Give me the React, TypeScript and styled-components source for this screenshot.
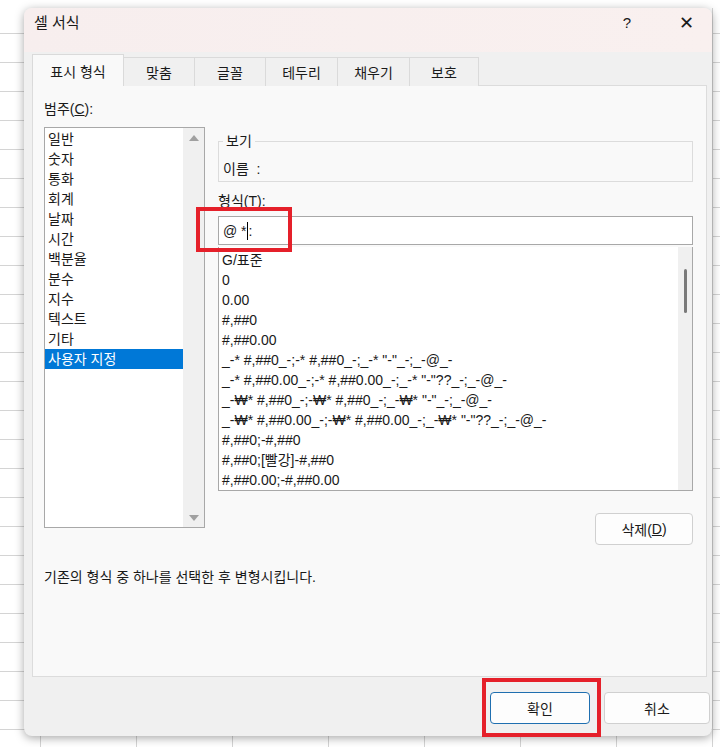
import React from "react";
import styled, { createGlobalStyle } from "styled-components";

const G = createGlobalStyle`
  html,body{margin:0;padding:0;}
  body{width:720px;height:747px;overflow:hidden;font-family:"Liberation Sans","Noto Sans CJK KR",sans-serif;font-size:14px;color:#1a1a1a;
    background-color:#fff;
    background-image:linear-gradient(#d4d4d4 1px,transparent 1px),linear-gradient(90deg,#d4d4d4 1px,transparent 1px);
    background-size:96px 29px,96px 29px;background-position:0 4px,40px 0;}
`;
const Page = styled.div`position:relative;width:720px;height:747px;padding:8px 8px 11px 24px;box-sizing:border-box;`;
const FormulaBar = styled.div`position:absolute;left:0;top:0;width:720px;height:8px;overflow:hidden;background:#fff;`;
const Dialog = styled.div`position:relative;height:100%;background:#f0f0f0;border-radius:8px;box-shadow:0 2px 10px rgba(0,0,0,.35);display:flex;flex-direction:column;overflow:hidden;`;
const Title = styled.div`height:44px;display:flex;align-items:flex-start;padding:6px 10px 0;box-sizing:border-box;background:linear-gradient(90deg,#f7eeee,#f9f0ef);font-size:15px;line-height:18px;
  .sp{flex:1} .q{margin-right:48px;font-size:15px} .x{font-size:18px;margin-right:8px;font-weight:300}`;
const Tabs = styled.div`display:flex;padding:3px 0 0 8px;height:31px;align-items:flex-end;`;
const Tab = styled.div<{ $a?: boolean; $w: number }>`width:${p => p.$w}px;height:${p => (p.$a ? 32 : 29)}px;box-sizing:border-box;display:flex;align-items:center;justify-content:center;
  border:1px solid #dadada;border-bottom:none;margin-right:-1px;background:${p => (p.$a ? "#f9f9f9" : "#f0f0f0")};position:relative;z-index:${p => (p.$a ? 2 : 1)};font-size:14px;`;
const Panel = styled.div`margin:0 5px 0 8px;height:592px;background:#f9f9f9;border:1px solid #dcdcdc;margin-top:-1px;display:flex;flex-direction:column;padding:14px 13px 0 11px;box-sizing:border-box;`;
const Row = styled.div`display:flex;gap:13px;`;
const Label = styled.div`font-size:14px;height:18px;line-height:18px;margin-bottom:9px;u{text-decoration:underline}`;
const ListBox = styled.div<{ $w: number; $h: number }>`width:${p => p.$w}px;height:${p => p.$h}px;box-sizing:border-box;background:#fff;border:1px solid #a8a8a8;display:flex;overflow:hidden;`;
const Items = styled.div`flex:1;padding-top:1px;`;
const Item = styled.div<{ $sel?: boolean }>`height:20px;line-height:20px;padding-left:3px;font-size:14px;white-space:nowrap;background:${p => (p.$sel ? "#0078d7" : "transparent")};color:${p => (p.$sel ? "#fff" : "#1a1a1a")};`;
const SBar = styled.div<{ $w: number }>`width:${p => p.$w}px;background:#f0f0f0;position:relative;display:flex;flex-direction:column;align-items:center;`;
const Arrow = styled.div<{ $down?: boolean }>`width:0;height:0;border-left:5px solid transparent;border-right:5px solid transparent;${p => (p.$down ? "border-top:6px solid #a0a0a0;margin-top:auto;margin-bottom:6px;" : "border-bottom:6px solid #a0a0a0;margin-top:7px;")}`;
const Thumb = styled.div`width:3px;height:44px;background:#7a7a7a;border-radius:2px;margin-top:22px;`;
const Right = styled.div`flex:1;display:flex;flex-direction:column;`;
const Group = styled.fieldset`margin:7px 0 0;height:48px;box-sizing:border-box;border:1px solid #dcdcdc;padding:0 4px;
  legend{padding:0 3px;font-size:14px;line-height:14px;margin-left:0;} div{margin-top:10px;}`;
const Input = styled.div`height:29px;box-sizing:border-box;background:#fff;border:1px solid #a8a8a8;display:flex;align-items:center;padding-left:4px;font-size:14px;
  i{display:inline-block;width:1px;height:18px;background:#000;margin:0 1px 0 0;vertical-align:middle}`;
const Btn = styled.div<{ $primary?: boolean; $w: number }>`width:${p => p.$w}px;height:32px;box-sizing:border-box;border:1px solid ${p => (p.$primary ? "#1f6fb0" : "#d0d0d0")};border-radius:4px;background:#fdfdfd;display:flex;align-items:center;justify-content:center;font-size:14px;u{text-decoration:underline}`;
const Desc = styled.div`margin-top:21px;font-size:14px;`;
const Footer = styled.div`display:flex;justify-content:flex-end;gap:14px;padding:15px 2px 0 0;`;
const RedBox = styled.div<{ $l: number; $t: number; $w: number; $h: number }>`position:absolute;left:${p => p.$l}px;top:${p => p.$t}px;width:${p => p.$w}px;height:${p => p.$h}px;border:4px solid #e5202a;box-sizing:border-box;z-index:10;`;

const cats = ["일반", "숫자", "통화", "회계", "날짜", "시간", "백분율", "분수", "지수", "텍스트", "기타", "사용자 지정"];
const fmts = ["G/표준", "0", "0.00", "#,##0", "#,##0.00", '_-* #,##0_-;-* #,##0_-;_-* "-"_-;_-@_-', '_-* #,##0.00_-;-* #,##0.00_-;_-* "-"??_-;_-@_-', '_-₩* #,##0_-;-₩* #,##0_-;_-₩* "-"_-;_-@_-', '_-₩* #,##0.00_-;-₩* #,##0.00_-;_-₩* "-"??_-;_-@_-', "#,##0;-#,##0", "#,##0;[빨강]-#,##0", "#,##0.00;-#,##0.00"];

export default function App() {
  return (
    <Page>
      <G />
      <FormulaBar />
      <Dialog>
        <Title>셀 서식<span className="sp" /><span className="q">?</span><span className="x">✕</span></Title>
        <Tabs>
          <Tab $a $w={92}>표시 형식</Tab><Tab $w={72}>맞춤</Tab><Tab $w={72}>글꼴</Tab><Tab $w={73}>테두리</Tab><Tab $w={73}>채우기</Tab><Tab $w={70}>보호</Tab>
        </Tabs>
        <Panel>
          <Label>범주(<u>C</u>):</Label>
          <Row>
            <ListBox $w={161} $h={401}>
              <Items>{cats.map((c, i) => <Item key={c} $sel={i === 11}>{c}</Item>)}</Items>
              <SBar $w={21}><Arrow /><Arrow $down /></SBar>
            </ListBox>
            <Right>
              <Group><legend>보기</legend><div>이름 &nbsp;:</div></Group>
              <Label style={{ marginTop: 10, marginBottom: 6 }}>형식(<u>T</u>):</Label>
              <Input>@ *<i />:</Input>
              <ListBox $w={475} $h={244} style={{ marginTop: 2, borderTop: "none" }}>
                <Items style={{ paddingTop: 3 }}>{fmts.map(f => <Item key={f}>{f}</Item>)}</Items>
                <SBar $w={14}><Thumb /></SBar>
              </ListBox>
              <Row style={{ justifyContent: "flex-end", marginTop: 22 }}><Btn $w={98}>삭제(<u>D</u>)</Btn></Row>
            </Right>
          </Row>
          <Desc>기존의 형식 중 하나를 선택한 후 변형시킵니다.</Desc>
        </Panel>
        <Footer><Btn $primary $w={100}>확인</Btn><Btn $w={106}>취소</Btn></Footer>
      </Dialog>
      <RedBox $l={196} $t={207} $w={96} $h={45} />
      <RedBox $l={482} $t={678} $w={119} $h={59} />
    </Page>
  );
}
